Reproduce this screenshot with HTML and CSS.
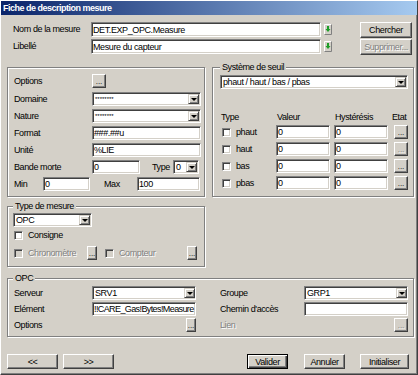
FILE: index.html
```html
<!DOCTYPE html>
<html lang="fr">
<head>
    <meta charset="UTF-8">
    <title>Fiche de description mesure</title>
    <link rel="stylesheet" href="styles.css">
</head>
<body>
    <div class="window">
        <div class="titlebar">Fiche de description mesure</div>
        <div class="content">
            <div class="top">
                <div class="top-row">
                    <span class="top-label">Nom de la mesure</span>
                    <input class="field top-field" type="text" value="DET.EXP_OPC.Measure">
                    <span class="pick"><svg width="8" height="11" viewBox="0 0 8 11"><rect width="8" height="11" fill="#d4d0c8"/><path d="M0.5 10.5V0.5H7.5" stroke="#fff" fill="none"/><path d="M0.5 10.5H7.5V0.5" stroke="#808080" fill="none"/><path d="M3 2h2v3h1.5L4 8 1.5 5H3z" fill="#1e9e28"/></svg></span>
                    <button class="btn top-btn">Chercher</button>
                </div>
                <div class="top-row">
                    <span class="top-label">Libellé</span>
                    <input class="field top-field" type="text" value="Mesure du capteur">
                    <span class="pick"><svg width="8" height="11" viewBox="0 0 8 11"><rect width="8" height="11" fill="#d4d0c8"/><path d="M0.5 10.5V0.5H7.5" stroke="#fff" fill="none"/><path d="M0.5 10.5H7.5V0.5" stroke="#808080" fill="none"/><path d="M3 2h2v3h1.5L4 8 1.5 5H3z" fill="#1e9e28"/></svg></span>
                    <button class="btn top-btn disabled">Supprimer...</button>
                </div>
            </div>

            <div class="main">
                <div class="col-left">
                    <div class="group props">
                        <div class="prow opt">
                            <span class="plabel">Options</span>
                            <button class="btn dots">...</button>
                        </div>
                        <div class="prow">
                            <span class="plabel">Domaine</span>
                            <div class="combo wide"><span class="ctext small">********</span><span class="drop"></span></div>
                        </div>
                        <div class="prow">
                            <span class="plabel">Nature</span>
                            <div class="combo wide"><span class="ctext small">********</span><span class="drop"></span></div>
                        </div>
                        <div class="prow">
                            <span class="plabel">Format</span>
                            <input class="field wide" type="text" value="###.##u">
                        </div>
                        <div class="prow">
                            <span class="plabel">Unité</span>
                            <input class="field wide" type="text" value="%LIE">
                        </div>
                        <div class="prow">
                            <span class="plabel">Bande morte</span>
                            <input class="field dead" type="text" value="0">
                            <span class="type-label">Type</span>
                            <div class="combo type-combo"><span class="ctext">0</span><span class="drop"></span></div>
                        </div>
                        <div class="prow">
                            <span class="min-label">Min</span>
                            <input class="field min-field" type="text" value="0">
                            <span class="max-label">Max</span>
                            <input class="field max-field" type="text" value="100">
                        </div>
                    </div>

                    <div class="group mesure">
                        <div class="legend">Type de mesure</div>
                        <div class="combo opc-type"><span class="ctext">OPC</span><span class="drop"></span></div>
                        <div class="crow consigne">
                            <span class="check"></span>
                            <span class="clabel">Consigne</span>
                        </div>
                        <div class="crow chrono">
                            <span class="check off"></span>
                            <span class="clabel chrono-label disabled">Chronomètre</span>
                            <button class="btn dots narrow">...</button>
                            <span class="check off count-check"></span>
                            <span class="clabel disabled">Compteur</span>
                            <button class="btn dots narrow push">...</button>
                        </div>
                    </div>
                </div>

                <div class="group seuil">
                    <div class="legend">Système de seuil</div>
                    <div class="combo seuil-combo"><span class="ctext">phaut / haut / bas / pbas</span><span class="drop"></span></div>
                    <div class="shead">
                        <span class="h-type">Type</span>
                        <span class="h-val">Valeur</span>
                        <span class="h-hys">Hystérésis</span>
                        <span>Etat</span>
                    </div>
                    <div class="srow">
                        <span class="check"></span>
                        <span class="slabel">phaut</span>
                        <input class="field sfield" type="text" value="0">
                        <input class="field sfield gap" type="text" value="0">
                        <button class="btn dots state">...</button>
                    </div>
                    <div class="srow">
                        <span class="check"></span>
                        <span class="slabel">haut</span>
                        <input class="field sfield" type="text" value="0">
                        <input class="field sfield gap" type="text" value="0">
                        <button class="btn dots state disabled">...</button>
                    </div>
                    <div class="srow">
                        <span class="check"></span>
                        <span class="slabel">bas</span>
                        <input class="field sfield" type="text" value="0">
                        <input class="field sfield gap" type="text" value="0">
                        <button class="btn dots state">...</button>
                    </div>
                    <div class="srow">
                        <span class="check"></span>
                        <span class="slabel">pbas</span>
                        <input class="field sfield" type="text" value="0">
                        <input class="field sfield gap" type="text" value="0">
                        <button class="btn dots state">...</button>
                    </div>
                </div>
            </div>

            <div class="group opc">
                <div class="legend">OPC</div>
                <div class="opc-grid">
                    <div class="ocell">
                        <span class="olabel">Serveur</span>
                        <div class="combo ofield"><span class="ctext">SRV1</span><span class="drop"></span></div>
                    </div>
                    <div class="ocell">
                        <span class="olabel right">Groupe</span>
                        <div class="combo ofield"><span class="ctext">GRP1</span><span class="drop"></span></div>
                    </div>
                    <div class="ocell">
                        <span class="olabel">Elément</span>
                        <input class="field ofield tight" type="text" value="!!CARE_Gas!Bytes!Measure">
                    </div>
                    <div class="ocell">
                        <span class="olabel right">Chemin d'accès</span>
                        <input class="field ofield" type="text" value="">
                    </div>
                    <div class="ocell">
                        <span class="olabel">Options</span>
                        <button class="btn dots narrow push">...</button>
                    </div>
                    <div class="ocell">
                        <span class="olabel right disabled">Lien</span>
                        <button class="btn dots push disabled">...</button>
                    </div>
                </div>
            </div>

            <div class="actions">
                <button class="btn nav">&lt;&lt;</button>
                <button class="btn nav next">&gt;&gt;</button>
                <button class="btn default">Valider</button>
                <button class="btn cancel">Annuler</button>
                <button class="btn reset">Initialiser</button>
            </div>
        </div>
    </div>
</body>
</html>
```

FILE: styles.css
```css
* {
    box-sizing: border-box;
}
body {
    margin: 0;
    background-color: #d4d0c8;
    font-family: "Liberation Sans", Arial, sans-serif;
    font-size: 9px;
    letter-spacing: -0.4px;
    color: #000;
}
.window {
    width: 418px;
    height: 375px;
    background-color: #d4d0c8;
    border-top: 1px solid #fff;
    border-left: 1px solid #fff;
    border-right: 1px solid #404040;
    border-bottom: 1px solid #404040;
    box-shadow: inset -1px -1px #808080;
}
.titlebar {
    height: 14px;
    line-height: 14px;
    padding-left: 2px;
    background: linear-gradient(to right, #0a246a, #a6caf0);
    color: #fff;
    font-weight: bold;
    letter-spacing: -0.5px;
}
.content {
    padding: 7px 3px 0 6px;
}

/* controles de base */
.field {
    appearance: none;
    height: 14px;
    margin: 0;
    padding: 0 1px;
    background-color: #fff;
    border: 1px solid;
    border-color: #808080 #fff #fff #808080;
    box-shadow: inset 1px 1px #404040, inset -1px -1px #d4d0c8;
    font: inherit;
    letter-spacing: inherit;
    color: #000;
    outline: none;
}
.combo {
    display: flex;
    align-items: center;
    height: 14px;
    padding: 1px;
    background-color: #fff;
    border: 1px solid;
    border-color: #808080 #fff #fff #808080;
    box-shadow: inset 1px 1px #404040, inset -1px -1px #d4d0c8;
}
.ctext {
    flex: 1;
    padding-left: 1px;
    white-space: nowrap;
    overflow: hidden;
}
.ctext.small {
    font-size: 6px;
    letter-spacing: 0;
}
.drop {
    display: flex;
    align-items: center;
    justify-content: center;
    width: 11px;
    height: 10px;
    background-color: #d4d0c8;
    border: 1px solid;
    border-color: #d4d0c8 #404040 #404040 #d4d0c8;
    box-shadow: inset 1px 1px #fff, inset -1px -1px #808080;
}
.drop::after {
    content: "";
    border-left: 3px solid transparent;
    border-right: 3px solid transparent;
    border-top: 3px solid #000;
}
.btn {
    padding: 0;
    margin: 0;
    background-color: #d4d0c8;
    border: 1px solid;
    border-color: #fff #404040 #404040 #fff;
    box-shadow: inset -1px -1px #808080;
    font: inherit;
    letter-spacing: inherit;
    color: #000;
}
.btn.default {
    border-color: #000;
    box-shadow: inset 1px 1px #fff, inset -1px -1px #404040, inset -2px -2px #808080;
}
.dots {
    width: 14px;
    height: 14px;
    line-height: 14px;
    font-size: 8px;
    letter-spacing: 0;
}
.dots.narrow {
    width: 10px;
}
.check {
    flex: none;
    width: 9px;
    height: 9px;
    background-color: #fff;
    border: 1px solid;
    border-color: #808080 #fff #fff #808080;
    box-shadow: inset 1px 1px #404040, inset -1px -1px #d4d0c8;
}
.check.off {
    background-color: #d4d0c8;
}
.disabled {
    color: #808080;
    text-shadow: 1px 1px #fff;
}
.push {
    margin-left: auto;
}

/* groupes */
.group {
    border: 1px solid #808080;
    box-shadow: inset 1px 1px #fff, 1px 1px #fff;
}
.legend {
    width: fit-content;
    height: 11px;
    line-height: 11px;
    margin-top: -6px;
    padding: 0 2px;
    background-color: #d4d0c8;
}

/* en-tete */
.top {
    display: grid;
    row-gap: 1px;
}
.top-row {
    display: flex;
    align-items: flex-start;
    height: 16px;
}
.top-label {
    width: 84px;
    padding-left: 6px;
    line-height: 15px;
}
.top-field {
    width: 230px;
    height: 15px;
}
.pick {
    display: flex;
    margin: 2px 0 0 3px;
}
.top-btn {
    width: 52px;
    height: 16px;
    margin-left: 28px;
}

/* zone principale */
.main {
    display: flex;
    align-items: flex-start;
    gap: 7px;
    margin-top: 12px;
}
.col-left {
    width: 198px;
}
.props {
    height: 130px;
    padding: 6px 3px 0 6px;
}
.prow {
    display: flex;
    align-items: center;
    height: 14px;
    margin-bottom: 3px;
}
.prow.opt {
    margin-bottom: 4px;
}
.plabel {
    width: 78px;
}
.wide {
    width: 109px;
}
.dead {
    width: 48px;
}
.type-label {
    width: 21px;
    margin-left: 12px;
}
.type-combo {
    width: 26px;
}
.min-label {
    width: 29px;
}
.min-field {
    width: 47px;
}
.max-label {
    width: 33px;
    margin-left: 14px;
}
.max-field {
    width: 63px;
}

.mesure {
    height: 61px;
    margin-top: 9px;
    padding: 0 7px 0 5px;
}
.opc-type {
    width: 79px;
    margin-top: 1px;
}
.crow {
    display: flex;
    align-items: center;
    height: 14px;
}
.consigne {
    margin-top: 1px;
}
.chrono {
    margin-top: 4px;
}
.crow .check {
    margin-left: 1px;
}
.clabel {
    margin-left: 5px;
}
.chrono-label {
    width: 59px;
}
.crow .count-check {
    margin-left: 8px;
}

.seuil {
    width: 202px;
    height: 130px;
    padding: 0 5px 0 7px;
}
.seuil-combo {
    margin-top: 2px;
}
.shead {
    display: flex;
    height: 10px;
    line-height: 10px;
    margin: 23px 0 3px;
}
.h-type {
    width: 56px;
    margin-left: 1px;
}
.h-val {
    width: 58px;
}
.h-hys {
    width: 57px;
}
.srow {
    display: flex;
    align-items: center;
    height: 14px;
    margin-bottom: 3px;
}
.srow .check {
    margin-left: 2px;
}
.slabel {
    width: 40px;
    margin-left: 5px;
}
.sfield {
    width: 54px;
}
.sfield.gap {
    margin-left: 4px;
}
.state {
    margin-left: 6px;
}

/* OPC */
.opc {
    height: 59px;
    margin-top: 11px;
    padding: 0 5px 0 6px;
}
.opc .legend {
    margin-left: -1px;
}
.opc-grid {
    display: grid;
    grid-template-columns: 182px 188px;
    grid-template-rows: 14px 14px 14px;
    column-gap: 24px;
    row-gap: 2px;
    margin-top: 2px;
}
.ocell {
    display: flex;
    align-items: center;
}
.olabel {
    width: 78px;
}
.olabel.right {
    width: 84px;
}
.ofield {
    width: 104px;
    padding: 0 0 0 1px;
}
.ofield.tight {
    letter-spacing: -0.6px;
}

/* boutons du bas */
.actions {
    display: flex;
    height: 15px;
    margin-top: 17px;
    padding-right: 5px;
}
.actions .btn {
    height: 15px;
}
.nav {
    width: 51px;
}
.nav.next {
    margin-left: 5px;
}
.default {
    width: 41px;
    margin-left: auto;
}
.cancel {
    width: 41px;
    margin-left: 16px;
}
.reset {
    width: 49px;
    margin-left: 15px;
}
```
